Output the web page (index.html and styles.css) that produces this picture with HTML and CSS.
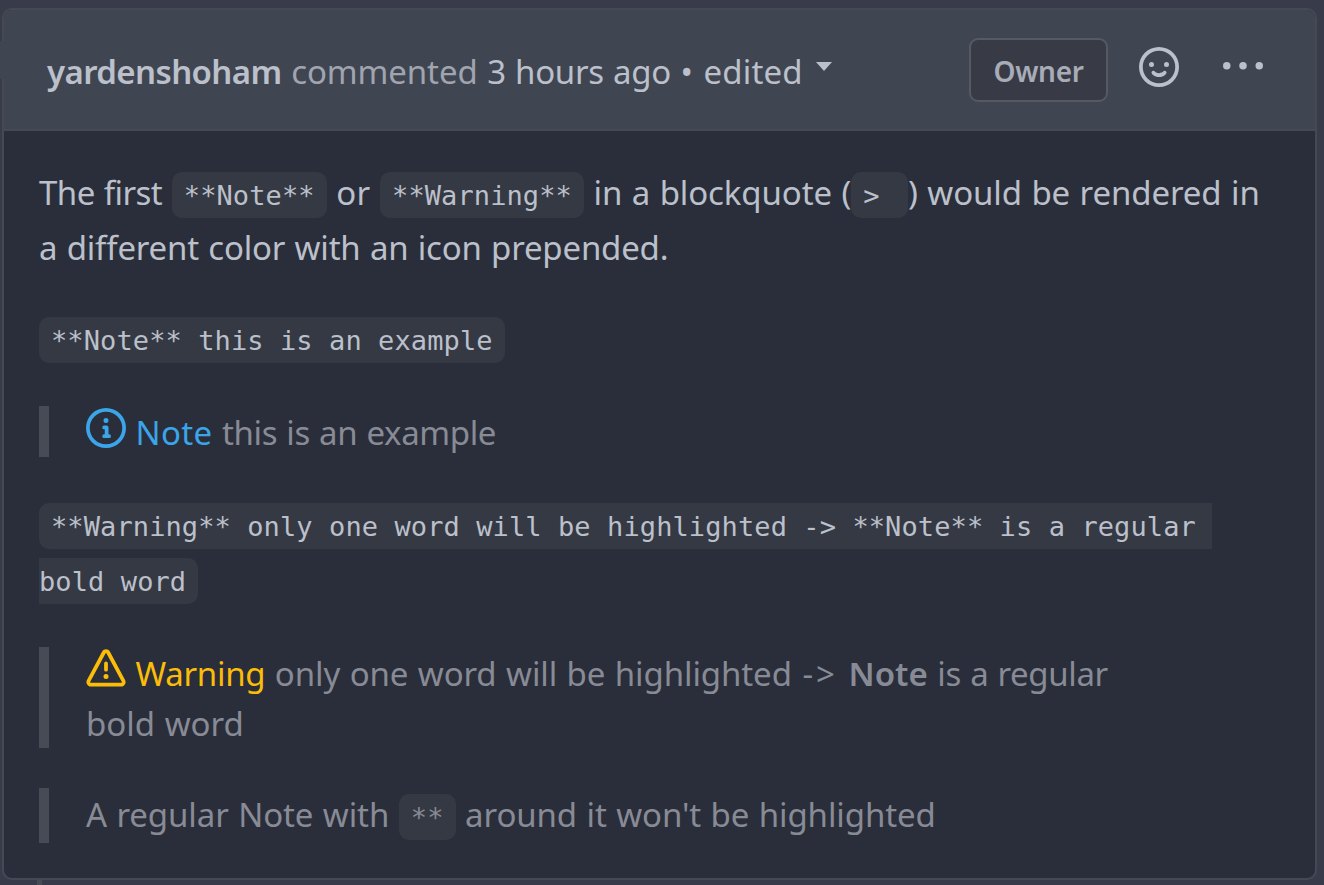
FILE: index.html
```html
<!DOCTYPE html>
<html lang="en">
<head>
  <meta charset="UTF-8" />
  <meta name="viewport" content="width=device-width, initial-scale=1.0"/>
  <title>Comment</title>
  <link rel="stylesheet" href="styles.css">
</head>
<body>
  <div class="comment">
    <div class="comment-header">
      <div class="comment-info">
        <a class="author">yardenshoham</a> <span class="muted">commented</span> <span class="time">3 hours ago</span> <span class="dot">•</span> <span class="edited">edited</span>
        <span class="caret"></span>
      </div>
      <div class="actions">
        <span class="label">Owner</span>
        <svg class="icon smiley" viewBox="0 0 16 16"><path fill-rule="evenodd" d="M1.5 8a6.5 6.5 0 1113 0 6.5 6.5 0 01-13 0zM8 0a8 8 0 100 16A8 8 0 008 0zM5 8a1 1 0 100-2 1 1 0 000 2zm7-1a1 1 0 11-2 0 1 1 0 012 0zM5.32 9.636a.75.75 0 011.038.175l.007.009c.103.118.22.222.35.31.264.178.683.37 1.285.37.602 0 1.02-.192 1.285-.371.13-.088.247-.192.35-.31l.007-.008a.75.75 0 111.222.87c-.22.3-.47.5-.73.68-.63.418-1.37.638-2.127.629-.946 0-1.652-.308-2.126-.63a3.331 3.331 0 01-.73-.68.75.75 0 01.183-1.044z"/></svg>
        <svg class="icon" viewBox="0 0 16 16"><circle cx="1.5" cy="7.5" r="1.5"/><circle cx="8" cy="7.5" r="1.5"/><circle cx="14.5" cy="7.5" r="1.5"/></svg>
      </div>
    </div>

    <div class="comment-body">
      <p><span class="tighter">The first</span> <code>**Note**</code> <span class="or">or</span> <code>**Warning**</code> <span class="snug">in a blockquote (</span><code>&gt; </code><span class="snug">) would be rendered in</span><br><span class="tight">a different color with an icon prepended.</span></p>
      <p><code>**Note** this is an example</code></p>
      <blockquote>
        <svg class="icon note" viewBox="0 0 16 16"><path fill-rule="evenodd" d="M8 1.5a6.5 6.5 0 100 13 6.5 6.5 0 000-13zM0 8a8 8 0 1116 0A8 8 0 010 8zm6.5-.25A.75.75 0 017.25 7h1a.75.75 0 01.75.75v2.75h.25a.75.75 0 010 1.5h-2a.75.75 0 010-1.5h.25v-2h-.25a.75.75 0 01-.75-.75zM8 6a1 1 0 100-2 1 1 0 000 2z"/></svg>
        <span class="note">Note</span> <span class="narrow">this is an example</span>
      </blockquote>
      <p><code>**Warning** only one word will be highlighted -&gt; **Note** is a regular <br>bold word</code></p>
      <blockquote>
        <svg class="icon warning" viewBox="0 0 16 16"><path fill-rule="evenodd" d="M8.22 1.754a.25.25 0 00-.44 0L1.698 13.132a.25.25 0 00.22.368h12.164a.25.25 0 00.22-.368L8.22 1.754zm-1.763-.707c.659-1.234 2.427-1.234 3.086 0l6.082 11.378A1.75 1.75 0 0114.082 15H1.918a1.75 1.75 0 01-1.543-2.575L6.457 1.047zM9 11a1 1 0 11-2 0 1 1 0 012 0zm-.25-5.25a.75.75 0 00-1.5 0v2.5a.75.75 0 001.5 0v-2.5z"/></svg>
        <span class="warning">Warning</span> <span class="snug">only one word will be highlighted</span> <span class="arrow">-&gt;</span> <strong>Note</strong> <span class="narrow">is a regular</span><br><span>bold word</span>
      </blockquote>
      <blockquote class="with-code"><span class="snug">A regular Note with</span> <code>**</code> <span class="snug">around it won't be highlighted</span></blockquote>
    </div>
  </div>
  <div class="timeline"></div>
</body>
</html>
```
FILE: styles.css
```css
* {
  box-sizing: border-box;
}
body {
  margin: 0;
  padding: 8px 7px 0 2px;
  height: 885px;
  overflow: hidden;
  background: #383b4a;
  color: #bbc0ca;
  font-family: "Noto Sans", "Open Sans", sans-serif;
  font-size: 33px;
  word-spacing: 1px;
}
.comment {
  position: relative;
  height: 872px;
  border: 2px solid #454855;
  border-radius: 10px;
  background: #2a2e3a;
}
.comment-header {
  display: flex;
  justify-content: space-between;
  height: 121px;
  padding: 28px 52px 0 43px;
  border-bottom: 2px solid #454855;
  border-radius: 8px 8px 0 0;
  background: #404552;
}
/* base of the arrow that points at the avatar */
.comment-header::before {
  content: "";
  position: absolute;
  left: -4px;
  top: 31px;
  width: 4px;
  height: 38px;
  background: #404552;
}
.comment-info {
  line-height: 68px;
  white-space: nowrap;
}
.author {
  font-weight: 600;
  letter-spacing: -0.6px;
}
.muted {
  color: #a0a4af;
  letter-spacing: -0.1px;
}
.time {
  letter-spacing: -0.3px;
}
.edited {
  letter-spacing: 0.15px;
}
.dot {
  margin-right: 1px;
}
.caret {
  display: inline-block;
  margin-left: 4px;
  border: 8px solid transparent;
  border-top: 9px solid #bbc0ca;
  border-bottom: 0;
  vertical-align: 13px;
}
.actions {
  display: flex;
  align-items: flex-start;
}
.label {
  width: 139px;
  height: 64px;
  border: 2px solid #555964;
  border-radius: 9px;
  background: #383b46;
  color: #a7acb7;
  font-size: 28px;
  font-weight: 600;
  letter-spacing: -0.3px;
  line-height: 62px;
  text-align: center;
}
.icon {
  width: 40px;
  height: 40px;
  fill: currentColor;
}
.actions .icon {
  margin-top: 9px;
}
.actions .smiley {
  margin: 9px 44px 0 31px;
}
.comment-body {
  padding: 34px 35px 0;
}
p {
  margin: 0 0 35px;
  line-height: 55px;
  white-space: nowrap;
}
code {
  padding: 8px 12px 7px;
  border-radius: 10px;
  background: #353944;
  font-family: "DejaVu Sans Mono", monospace;
  font-size: 27px;
  letter-spacing: 0.1px;
  line-height: 1;
  word-spacing: 0;
  white-space: pre;
}
blockquote {
  margin: 41px 0 39px;
  padding: 2px 0 0 37px;
  border-left: 10px solid #464b56;
  color: #888b95;
  line-height: 49.4px;
  white-space: nowrap;
}
blockquote .icon {
  margin: 0 0 -4px;
  vertical-align: 1px;
}
.with-code {
  margin-top: 40px;
  padding: 0 0 1px 37px;
  line-height: 54px;
}
.note {
  color: #3aa5e8;
  letter-spacing: 0.3px;
}
.warning {
  color: #fbbd08;
  letter-spacing: -0.3px;
}
.arrow {
  margin: 0 1px;
  letter-spacing: 3px;
}
strong {
  font-weight: 600;
}
.or {
  letter-spacing: 0.3px;
}
.snug {
  letter-spacing: -0.1px;
}
.tight {
  letter-spacing: -0.2px;
}
.narrow {
  letter-spacing: -0.37px;
}
.tighter {
  letter-spacing: -0.55px;
}
.timeline {
  width: 5px;
  height: 5px;
  margin-left: 35px;
  background: #464b56;
}
```
